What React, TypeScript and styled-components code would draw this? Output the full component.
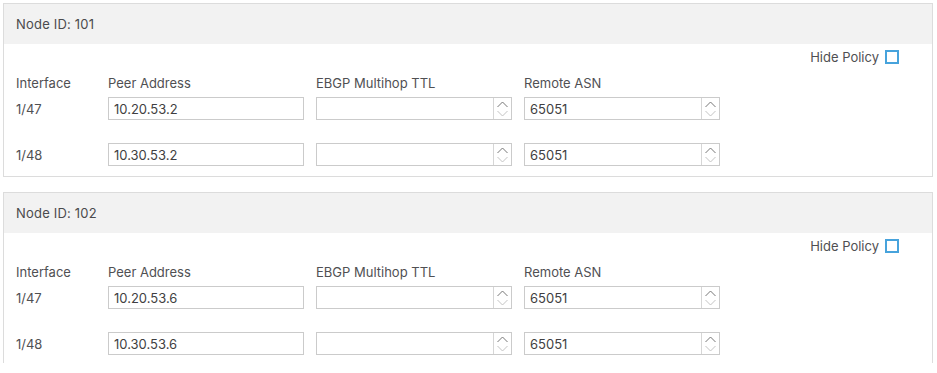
import React from 'react';
import styled, { createGlobalStyle } from 'styled-components';

const GlobalStyle = createGlobalStyle`
    body {
        margin: 0;
        background: #fff;
        font-family: Inter, "Open Sans", Arial, sans-serif;
        color: #4f4f52;
    }
`;

interface PeerRow {
    iface: string;
    peer: string;
    ttl: string;
    asn: string;
}

interface NodeData {
    id: number;
    rows: PeerRow[];
}

const nodes: NodeData[] = [
    {
        id: 101,
        rows: [
            { iface: '1/47', peer: '10.20.53.2', ttl: '', asn: '65051' },
            { iface: '1/48', peer: '10.30.53.2', ttl: '', asn: '65051' },
        ],
    },
    {
        id: 102,
        rows: [
            { iface: '1/47', peer: '10.20.53.6', ttl: '', asn: '65051' },
            { iface: '1/48', peer: '10.30.53.6', ttl: '', asn: '65051' },
        ],
    },
];

const Page = styled.div`
    height: 363px;
    overflow: hidden;
    padding: 3px 4px 0 3px;
    box-sizing: border-box;
    display: flex;
    flex-direction: column;
    gap: 15px;
`;

const Panel = styled.section`
    border: 1px solid #dcdcdc;
    flex-shrink: 0;
`;

const PanelHeader = styled.div`
    height: 40px;
    background: #f2f2f2;
    display: flex;
    align-items: center;
    padding-left: 12px;
    font-size: 13px;
    letter-spacing: 0.2px;
    color: #4a4a4d;
`;

const PanelBody = styled.div`
    padding: 6px 33px 10px 12px;
`;

const PolicyRow = styled.label`
    display: flex;
    justify-content: flex-end;
    align-items: center;
    gap: 6px;
    height: 14px;
    font-size: 13px;
    color: #4f4f52;
`;

const CheckBox = styled.span`
    width: 14px;
    height: 14px;
    box-sizing: border-box;
    border: 2px solid #47a3dc;
    background: #fff;
`;

const Grid = styled.div<{ $top: number }>`
    display: grid;
    grid-template-columns: 80px 196px 196px 196px;
    column-gap: 12px;
    align-items: center;
    margin-top: ${(p) => p.$top}px;
`;

const ColLabel = styled.div`
    font-size: 13px;
    line-height: 16px;
    color: #505053;
`;

const Cell = styled.div`
    font-size: 13px;
    color: #505053;
`;

const InputBox = styled.div`
    height: 23px;
    box-sizing: border-box;
    border: 1px solid #cbcbcb;
    display: flex;
    align-items: center;
    background: #fff;
`;

const InputText = styled.span`
    flex: 1;
    padding-left: 5px;
    font-size: 13px;
    color: #3f3f42;
`;

const Spinner = styled.span`
    width: 17px;
    height: 100%;
    border-left: 1px solid #d6d6d6;
    display: flex;
    align-items: center;
    justify-content: center;
`;

function SpinnerIcon(): JSX.Element {
    return (
        <svg width='13' height='20' viewBox='0 0 13 20'>
            <path d='M1.5 8 L6.5 3 L11.5 8' fill='none' stroke='#777' strokeWidth='1' />
            <path d='M1.5 12 L6.5 17 L11.5 12' fill='none' stroke='#c4c4c4' strokeWidth='1' />
        </svg>
    );
}

function NumberField({ value }: { value: string }): JSX.Element {
    return (
        <InputBox>
            <InputText>{value}</InputText>
            <Spinner><SpinnerIcon /></Spinner>
        </InputBox>
    );
}

function NodePanel({ node }: { node: NodeData }): JSX.Element {
    return (
        <Panel>
            <PanelHeader>{`Node ID: ${node.id}`}</PanelHeader>
            <PanelBody>
                <PolicyRow>
                    Hide Policy
                    <CheckBox />
                </PolicyRow>
                <Grid $top={11}>
                    <ColLabel>Interface</ColLabel>
                    <ColLabel>Peer Address</ColLabel>
                    <ColLabel>EBGP Multihop TTL</ColLabel>
                    <ColLabel>Remote ASN</ColLabel>
                </Grid>
                {node.rows.map((row, index) => (
                    <Grid $top={index === 0 ? 6 : 23} key={row.iface}>
                        <Cell>{row.iface}</Cell>
                        <InputBox><InputText>{row.peer}</InputText></InputBox>
                        <NumberField value={row.ttl} />
                        <NumberField value={row.asn} />
                    </Grid>
                ))}
            </PanelBody>
        </Panel>
    );
}

export default function App(): JSX.Element {
    return (
        <>
            <GlobalStyle />
            <Page>
                {nodes.map((node) => <NodePanel node={node} key={node.id} />)}
            </Page>
        </>
    );
}
